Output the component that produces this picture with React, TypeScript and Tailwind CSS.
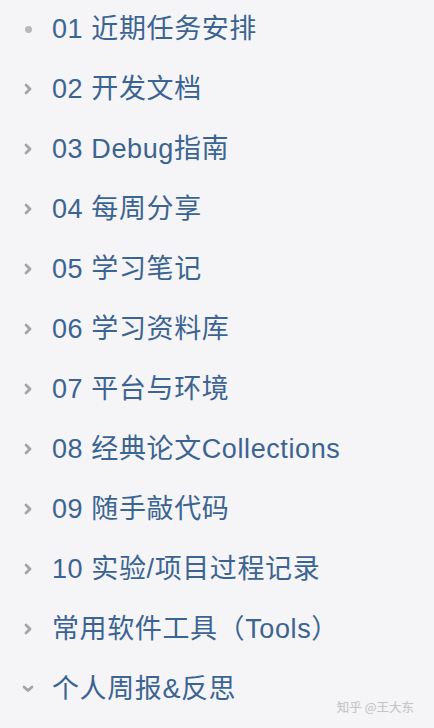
import React from "react";

const items: { label: string; kind: "dot" | "right" | "down" }[] = [
  { label: "01 近期任务安排", kind: "dot" },
  { label: "02 开发文档", kind: "right" },
  { label: "03 Debug指南", kind: "right" },
  { label: "04 每周分享", kind: "right" },
  { label: "05 学习笔记", kind: "right" },
  { label: "06 学习资料库", kind: "right" },
  { label: "07 平台与环境", kind: "right" },
  { label: "08 经典论文Collections", kind: "right" },
  { label: "09 随手敲代码", kind: "right" },
  { label: "10 实验/项目过程记录", kind: "right" },
  { label: "常用软件工具（Tools）", kind: "right" },
  { label: "个人周报&反思", kind: "down" },
];

function Marker({ kind }: { kind: "dot" | "right" | "down" }) {
  if (kind === "dot") {
    return <span className="block w-[7px] h-[7px] rounded-full bg-[#b7b8bb]" />;
  }
  if (kind === "right") {
    return (
      <svg width="10" height="12" viewBox="0 0 10 12" fill="none">
        <path d="M3 2 L7 6 L3 10" stroke="#a4a5a8" strokeWidth="2.8" strokeLinecap="round" strokeLinejoin="round" />
      </svg>
    );
  }
  return (
    <svg width="14" height="10" viewBox="0 0 14 10" fill="none">
      <path d="M3 3 L7 6.5 L11 3" stroke="#a4a5a8" strokeWidth="2.8" strokeLinecap="round" strokeLinejoin="round" />
    </svg>
  );
}

export default function App() {
  return (
    <div className="relative w-[434px] h-[728px] overflow-hidden bg-[#f5f5f7]">
      <ul className="flex flex-col -mt-px">
        {items.map((it) => (
          <li key={it.label} className="flex items-center h-[60px]">
            <span className="flex items-center justify-center w-[20px] ml-[18px] mr-[14px]">
              <Marker kind={it.kind} />
            </span>
            <span
              className="text-[27px] leading-none tracking-[0.6px] text-[#3c6492] whitespace-nowrap"
              style={{ fontFamily: '"Liberation Sans", "Noto Sans CJK SC", sans-serif' }}
            >
              {it.label}
            </span>
          </li>
        ))}
      </ul>
      <div
        className="absolute right-[20px] bottom-[11px] text-[12.5px] text-[#c6c6c9]"
        style={{ fontFamily: '"Noto Sans CJK SC", "Liberation Sans", sans-serif', textShadow: "0 0 1px #e0e0e0" }}
      >
        知乎 @王大东
      </div>
    </div>
  );
}
